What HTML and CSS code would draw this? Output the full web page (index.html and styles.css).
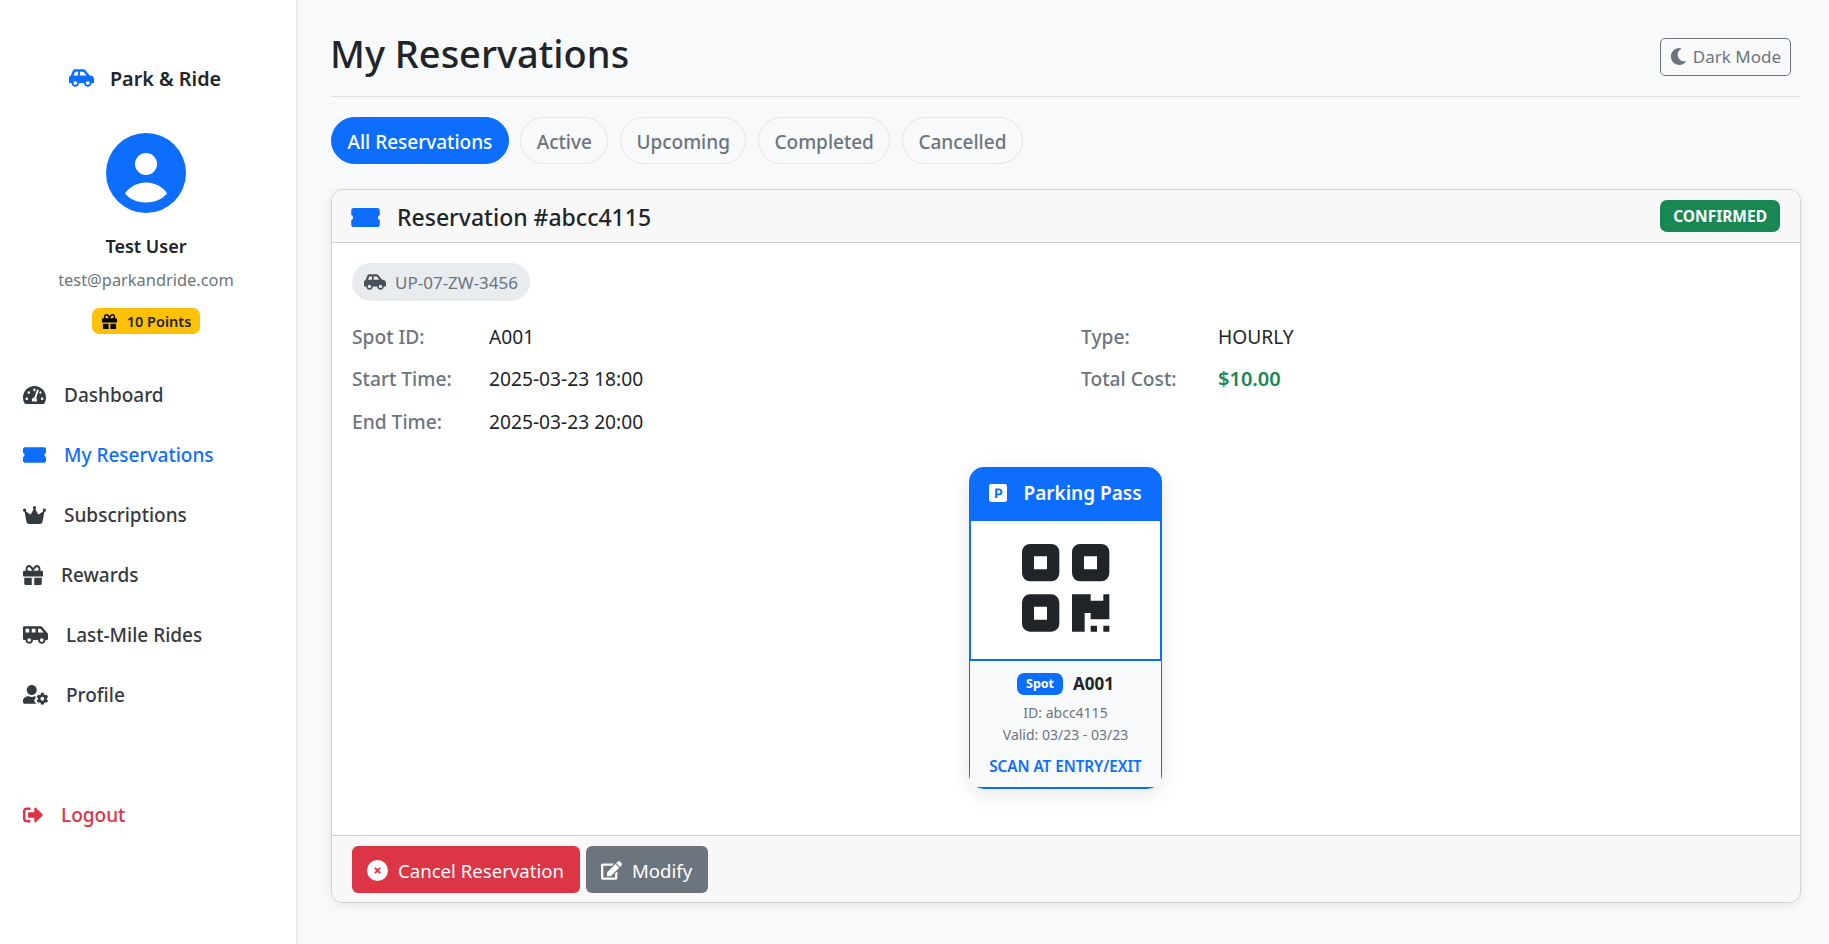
FILE: index.html
```html
<!DOCTYPE html>
<html lang="en">
<head>
    <meta charset="UTF-8">
    <meta name="viewport" content="width=device-width, initial-scale=1.0">
    <title>My Reservations - Park &amp; Ride</title>
    <link rel="stylesheet" href="styles.css">
</head>
<body>

<!-- Sidebar -->
<aside class="sidebar">
    <div class="brand">
        <svg class="brand-icon" viewBox="0 32 640 448"><path d="M544 192h-16L419.22 56.02A64.025 64.025 0 0 0 369.24 32H155.33c-26.17 0-49.7 15.93-59.42 40.23L48 194.26C20.44 201.4 0 226.21 0 256v112c0 8.84 7.16 16 16 16h48c0 53.02 42.98 96 96 96s96-42.98 96-96h128c0 53.02 42.98 96 96 96s96-42.98 96-96h48c8.84 0 16-7.16 16-16v-80c0-53.02-42.98-96-96-96zM160 432c-26.47 0-48-21.53-48-48s21.53-48 48-48 48 21.53 48 48-21.53 48-48 48zm72-240H116.93l38.4-96H232v96zm48 0V96h89.24l76.8 96H280zm200 240c-26.47 0-48-21.53-48-48s21.53-48 48-48 48 21.53 48 48-21.53 48-48 48z"/></svg>
        <span>Park &amp; Ride</span>
    </div>

    <div class="user">
        <svg class="avatar" viewBox="0 0 16 16">
            <circle cx="8" cy="8" r="8" fill="#0d6efd"/>
            <circle cx="8" cy="6.2" r="2.2" fill="#fff"/>
            <path fill="#fff" d="M3.8 12.1C4.6 10.9 6 9.9 8 9.9s3.5 1 4.2 2.2C11.2 13.3 9.7 13.9 8 13.9s-3.2-.6-4.2-1.8z"/>
        </svg>
        <div class="user-name">Test User</div>
        <div class="user-email">test@parkandride.com</div>
        <span class="points">
            <svg class="points-icon" viewBox="0 32 512 448" preserveAspectRatio="none"><path d="M32 448c0 17.7 14.3 32 32 32h160V320H32v128zm256 32h160c17.7 0 32-14.3 32-32V320H288v160zm192-320h-42.1c6.2-12.1 10.1-25.5 10.1-40 0-48.5-39.5-88-88-88-41.6 0-68.5 21.3-103 68.3-34.5-47-61.4-68.3-103-68.3-48.5 0-88 39.5-88 88 0 14.5 3.8 27.9 10.1 40H32c-17.7 0-32 14.3-32 32v80c0 8.8 7.2 16 16 16h480c8.8 0 16-7.2 16-16v-80c0-17.7-14.3-32-32-32zm-326.1 0c-22.1 0-40-17.9-40-40s17.9-40 40-40c19.9 0 34.6 3.3 86.1 80h-86.1zm206.1 0h-86.1c51.4-76.5 65.7-80 86.1-80 22.1 0 40 17.9 40 40s-17.9 40-40 40z"/></svg>
            10 Points
        </span>
    </div>

    <nav class="nav">
        <a class="nav-link" href="#">
            <svg class="nav-icon" viewBox="0 32 576 448"><path d="M288 32C128.94 32 0 160.94 0 320c0 52.8 14.25 102.26 39.06 144.8 5.61 9.62 16.3 15.2 27.44 15.2h443c11.14 0 21.83-5.58 27.44-15.2C561.75 422.26 576 372.8 576 320c0-159.06-128.94-288-288-288zm0 64c14.71 0 26.58 10.13 30.32 23.65-1.11 2.26-2.64 4.23-3.45 6.67l-9.22 27.67c-5.13 3.49-10.97 6.01-17.64 6.01-17.67 0-32-14.33-32-32S270.33 96 288 96zM96 384c-17.67 0-32-14.33-32-32s14.33-32 32-32 32 14.33 32 32-14.33 32-32 32zm48-160c-17.67 0-32-14.33-32-32s14.33-32 32-32 32 14.33 32 32-14.33 32-32 32zm246.77-72.41l-61.33 184C343.13 347.33 352 364.54 352 384c0 11.72-3.38 22.55-8.88 32H232.88c-5.5-9.45-8.88-20.28-8.88-32 0-33.94 26.5-61.43 59.9-63.59l61.34-184.01c4.17-12.56 17.73-19.45 30.36-15.17 12.57 4.19 19.35 17.77 15.17 30.36zm14.66 57.2l15.52-46.55c3.47-1.29 7.13-2.23 11.05-2.23 17.67 0 32 14.33 32 32s-14.33 32-32 32c-11.38-.01-20.89-6.28-26.57-15.22zM480 384c-17.67 0-32-14.33-32-32s14.33-32 32-32 32 14.33 32 32-14.33 32-32 32z"/></svg>
            Dashboard
        </a>
        <a class="nav-link active" href="#">
            <svg class="nav-icon" viewBox="0 64 576 384"><path d="M48 64h480c26.5 0 48 21.5 48 48v96c-24 0-36 22-36 48s12 48 36 48v96c0 26.5-21.5 48-48 48H48c-26.5 0-48-21.5-48-48v-96c24 0 36-22 36-48s-12-48-36-48v-96c0-26.5 21.5-48 48-48z"/></svg>
            My Reservations
        </a>
        <a class="nav-link" href="#">
            <svg class="nav-icon" viewBox="0 32 576 448"><path d="M309 106c11.400-7 19-19.700 19-34c0-22.100-17.900-40-40-40s-40 17.900-40 40c0 14.400 7.600 27 19 34L209.700 220.600c-9.100 18.200-32.700 23.400-48.600 10.700L72 160c5-6.700 8-15 8-24c0-22.100-17.900-40-40-40S0 113.900 0 136s17.900 40 40 40c.2 0 .5 0 .7 0L86.400 427.400c5.500 30.400 32 52.600 63 52.600H426.600c30.900 0 57.400-22.100 63-52.600L535.300 176c.2 0 .5 0 .7 0c22.100 0 40-17.900 40-40s-17.900-40-40-40s-40 17.900-40 40c0 9 3 17.300 8 24l-89.100 71.300c-15.900 12.700-39.500 7.500-48.600-10.700L309 106z"/></svg>
            Subscriptions
        </a>
        <a class="nav-link" href="#">
            <svg class="nav-icon small tall" viewBox="0 32 512 448" preserveAspectRatio="none"><path d="M32 448c0 17.7 14.3 32 32 32h160V320H32v128zm256 32h160c17.7 0 32-14.3 32-32V320H288v160zm192-320h-42.1c6.2-12.1 10.1-25.5 10.1-40 0-48.5-39.5-88-88-88-41.6 0-68.5 21.3-103 68.3-34.5-47-61.4-68.3-103-68.3-48.5 0-88 39.5-88 88 0 14.5 3.8 27.9 10.1 40H32c-17.7 0-32 14.3-32 32v80c0 8.8 7.2 16 16 16h480c8.8 0 16-7.2 16-16v-80c0-17.7-14.3-32-32-32zm-326.1 0c-22.1 0-40-17.9-40-40s17.9-40 40-40c19.9 0 34.6 3.3 86.1 80h-86.1zm206.1 0h-86.1c51.4-76.5 65.7-80 86.1-80 22.1 0 40 17.9 40 40s-17.9 40-40 40z"/></svg>
            Rewards
        </a>
        <a class="nav-link" href="#">
            <svg class="nav-icon wide" viewBox="0 32 640 448"><path d="M628.88 210.65L494.39 49.27A48.01 48.01 0 0 0 457.52 32H32C14.33 32 0 46.33 0 64v288c0 17.67 14.33 32 32 32h32c0 53.02 42.98 96 96 96s96-42.98 96-96h128c0 53.02 42.98 96 96 96s96-42.98 96-96h32c17.67 0 32-14.33 32-32V241.38c0-11.23-3.94-22.1-11.12-30.73zM64 192V96h96v96H64zm96 240c-26.51 0-48-21.49-48-48s21.49-48 48-48 48 21.49 48 48-21.49 48-48 48zm160-240h-96V96h96v96zm160 240c-26.51 0-48-21.49-48-48s21.49-48 48-48 48 21.49 48 48-21.49 48-48 48zm-96-240V96h66.02l80 96H384z"/></svg>
            Last-Mile Rides
        </a>
        <a class="nav-link" href="#">
            <svg class="nav-icon wide tall" viewBox="0 0 640 512"><path d="M610.5 373.3c2.6-14.1 2.6-28.5 0-42.6l25.8-14.9c3-1.7 4.3-5.2 3.3-8.5-6.7-21.6-18.2-41.2-33.2-57.4-2.3-2.5-6-3.1-9-1.4l-25.8 14.9c-10.9-9.3-23.4-16.5-36.9-21.3v-29.8c0-3.4-2.4-6.4-5.7-7.1-22.3-5-45-4.8-66.2 0-3.3.7-5.7 3.7-5.7 7.1v29.8c-13.5 4.8-26 12-36.9 21.3l-25.8-14.9c-2.9-1.7-6.7-1.1-9 1.4-15 16.2-26.5 35.8-33.2 57.4-1 3.3.4 6.8 3.3 8.5l25.8 14.9c-2.6 14.1-2.6 28.5 0 42.6l-25.8 14.9c-3 1.7-4.3 5.2-3.3 8.5 6.7 21.6 18.2 41.1 33.2 57.4 2.3 2.5 6 3.1 9 1.4l25.8-14.9c10.9 9.3 23.4 16.5 36.9 21.3v29.8c0 3.4 2.4 6.4 5.7 7.1 22.3 5 45 4.8 66.2 0 3.3-.7 5.7-3.7 5.7-7.1v-29.8c13.5-4.8 26-12 36.9-21.3l25.8 14.9c2.9 1.7 6.7 1.1 9-1.4 15-16.2 26.5-35.8 33.2-57.4 1-3.3-.4-6.8-3.3-8.5l-25.8-14.9zM496 400.5c-26.8 0-48.5-21.8-48.5-48.5s21.8-48.5 48.5-48.5 48.5 21.8 48.5 48.5-21.7 48.5-48.5 48.5zM224 256c70.7 0 128-57.3 128-128S294.7 0 224 0 96 57.3 96 128s57.3 128 128 128z"/><path d="M134.4 288h16.7c22.2 10.2 46.9 16 72.9 16s50.7-5.8 72.9-16h16c5 0 10 .3 15 1-8 25-12 45-10 63l-20 12c-10 8-12 20-6 44 5 18 20 36 26 44 3 5 6 10 16 12 4 12 10 17 22 17H48c-26.5 0-48-21.5-48-48v-41.6C0 348 60 288 134.4 288z"/></svg>
            Profile
        </a>
    </nav>

    <a class="logout" href="#">
        <svg class="nav-icon small" viewBox="0 32 512 448"><path d="M497 273L329 441c-15 15-41 4.5-41-17v-96H152c-13.3 0-24-10.7-24-24v-96c0-13.3 10.7-24 24-24h136V88c0-21.4 25.9-32 41-17l168 168c9.3 9.4 9.3 24.6 0 34zM192 436v-40c0-6.6-5.4-12-12-12H96c-17.7 0-32-14.3-32-32V160c0-17.7 14.3-32 32-32h84c6.6 0 12-5.4 12-12V76c0-6.6-5.4-12-12-12H96c-53 0-96 43-96 96v192c0 53 43 96 96 96h84c6.6 0 12-5.4 12-12z"/></svg>
        Logout
    </a>
</aside>

<!-- Main content -->
<main class="main">
    <header class="page-header">
        <h1>My Reservations</h1>
        <button class="dark-toggle" type="button">
            <svg class="moon" viewBox="0 0 512 512"><path d="M283.211 512c78.962 0 151.079-35.925 198.857-94.792 7.068-8.708-.639-21.43-11.562-19.35-124.203 23.654-238.262-71.576-238.262-196.954 0-72.222 38.662-138.635 101.498-174.394 9.686-5.512 7.25-20.197-3.756-22.23A258.156 258.156 0 0 0 283.211 0c-141.309 0-256 114.511-256 256 0 141.309 114.511 256 256 256z"/></svg>
            Dark Mode
        </button>
    </header>

    <div class="tabs">
        <a class="tab active" href="#">All Reservations</a>
        <a class="tab" href="#">Active</a>
        <a class="tab" href="#">Upcoming</a>
        <a class="tab" href="#">Completed</a>
        <a class="tab" href="#">Cancelled</a>
    </div>

    <section class="card">
        <div class="card-header">
            <h2>
                <svg class="ticket" viewBox="0 64 576 384"><path d="M48 64h480c26.5 0 48 21.5 48 48v96c-24 0-36 22-36 48s12 48 36 48v96c0 26.5-21.5 48-48 48H48c-26.5 0-48-21.5-48-48v-96c24 0 36-22 36-48s-12-48-36-48v-96c0-26.5 21.5-48 48-48z"/></svg>
                Reservation #abcc4115
            </h2>
            <span class="status">CONFIRMED</span>
        </div>

        <div class="card-body">
            <span class="plate">
                <svg class="plate-icon" viewBox="0 32 640 448"><path d="M544 192h-16L419.22 56.02A64.025 64.025 0 0 0 369.24 32H155.33c-26.17 0-49.7 15.93-59.42 40.23L48 194.26C20.44 201.4 0 226.21 0 256v112c0 8.84 7.16 16 16 16h48c0 53.02 42.98 96 96 96s96-42.98 96-96h128c0 53.02 42.98 96 96 96s96-42.98 96-96h48c8.84 0 16-7.16 16-16v-80c0-53.02-42.98-96-96-96zM160 432c-26.47 0-48-21.53-48-48s21.53-48 48-48 48 21.53 48 48-21.53 48-48 48zm72-240H116.93l38.4-96H232v96zm48 0V96h89.24l76.8 96H280zm200 240c-26.47 0-48-21.53-48-48s21.53-48 48-48 48 21.53 48 48-21.53 48-48 48z"/></svg>
                UP-07-ZW-3456
            </span>

            <div class="details">
                <div class="detail"><span class="label">Spot ID:</span><span>A001</span></div>
                <div class="detail"><span class="label">Type:</span><span>HOURLY</span></div>
                <div class="detail"><span class="label">Start Time:</span><span>2025-03-23 18:00</span></div>
                <div class="detail"><span class="label">Total Cost:</span><span class="cost">$10.00</span></div>
                <div class="detail"><span class="label">End Time:</span><span>2025-03-23 20:00</span></div>
            </div>

            <div class="pass">
                <div class="pass-header">
                    <svg class="p-icon" viewBox="0 0 16 16"><path fill-rule="evenodd" d="M2 0a2 2 0 0 0-2 2v12a2 2 0 0 0 2 2h12a2 2 0 0 0 2-2V2a2 2 0 0 0-2-2H2zm3.5 4h3.3c1.9 0 3.2 1.2 3.2 3s-1.3 3-3.2 3H7.4v2.5H5.5V4zm1.9 1.5v3h1.2c1 0 1.5-.6 1.5-1.500s-.5-1.500-1.500-1.500H7.400z"/></svg>
                    Parking Pass
                </div>
                <div class="pass-qr">
                    <svg class="qr" viewBox="0 0 264 264">
                        <path fill-rule="evenodd" d="M24 0h64a24 24 0 0 1 24 24v64a24 24 0 0 1-24 24H24A24 24 0 0 1 0 88V24A24 24 0 0 1 24 0zm12 37v39h39V37z"/>
                        <path fill-rule="evenodd" d="M174 0h64a24 24 0 0 1 24 24v64a24 24 0 0 1-24 24h-64a24 24 0 0 1-24-24V24a24 24 0 0 1 24-24zm12 37v39h39V37z"/>
                        <path fill-rule="evenodd" d="M24 151h64a24 24 0 0 1 24 24v64a24 24 0 0 1-24 24H24a24 24 0 0 1-24-24v-64a24 24 0 0 1 24-24zm12 37v39h39v-39z"/>
                        <path d="M150 151h56v19h38v-19h18v75h-56v-19h-18v56h-38z"/>
                        <path d="M206 245h19v18h-19zM244 245h18v18h-18z"/>
                    </svg>
                </div>
                <div class="pass-info">
                    <div class="pass-spot"><span class="spot-tag">Spot</span><strong>A001</strong></div>
                    <div class="pass-meta">ID: abcc4115</div>
                    <div class="pass-meta">Valid: 03/23 - 03/23</div>
                    <div class="pass-scan">SCAN AT ENTRY/EXIT</div>
                </div>
            </div>
        </div>

        <div class="card-footer">
            <button class="btn btn-danger" type="button">
                <svg class="btn-icon" viewBox="0 0 16 16"><circle cx="8" cy="8" r="8" fill="#fff"/><path d="M6 6l4 4M10 6l-4 4" stroke="#dc3545" stroke-width="1.5" fill="none"/></svg>
                Cancel Reservation
            </button>
            <button class="btn btn-secondary" type="button">
                <svg class="btn-icon edit" viewBox="0 0 576 512"><path d="M402.6 83.2l90.2 90.2c3.8 3.8 3.8 10 0 13.8L274.4 405.6l-92.8 10.3c-12.4 1.4-22.9-9.1-21.5-21.5l10.3-92.8L388.8 83.2c3.8-3.8 10-3.8 13.8 0zm162-22.9l-48.8-48.8c-15.2-15.2-39.9-15.2-55.2 0l-35.4 35.4c-3.8 3.8-3.8 10 0 13.8l90.2 90.2c3.8 3.8 10 3.8 13.8 0l35.4-35.4c15.2-15.3 15.2-40 0-55.2zM384 346.2V448H64V128h229.8c3.2 0 6.2-1.3 8.5-3.5l40-40c7.6-7.6 2.2-20.5-8.5-20.5H48C21.5 64 0 85.5 0 112v352c0 26.5 21.5 48 48 48h352c26.5 0 48-21.5 48-48V306.2c0-10.7-12.9-16-20.5-8.5l-40 40c-2.2 2.3-3.5 5.3-3.5 8.5z"/></svg>
                Modify
            </button>
        </div>
    </section>
</main>

</body>
</html>
```

FILE: styles.css
```css
* {
    box-sizing: border-box;
}

body {
    margin: 0;
    height: 944px;
    display: flex;
    overflow: hidden;
    font-family: "Noto Sans", sans-serif;
    font-size: 19.2px;
    color: #212529;
    background-color: #f8f9fa;
}

a {
    text-decoration: none;
}

/* Sidebar */
.sidebar {
    width: 298px;
    flex-shrink: 0;
    padding: 63px 27px 0 23px;
    background-color: #fff;
    border-right: 2px solid #e9ecef;
    display: flex;
    flex-direction: column;
}

.brand {
    display: flex;
    align-items: center;
    justify-content: center;
    gap: 16px;
    height: 30px;
    padding-right: 2px;
    font-size: 19.8px;
    font-weight: 600;
}

.brand-icon {
    width: 25px;
    height: 18px;
    fill: #0d6efd;
}

.user {
    margin-top: 40px;
    display: flex;
    flex-direction: column;
    align-items: center;
}

.avatar {
    width: 80px;
    height: 80px;
}

.user-name {
    margin-top: 20px;
    font-size: 18px;
    font-weight: 600;
    line-height: 26px;
}

.user-email {
    margin-top: 9px;
    font-size: 16.4px;
    line-height: 24px;
    color: #6c757d;
}

.points {
    margin-top: 16px;
    height: 26px;
    padding: 0 9px 0 10px;
    display: flex;
    align-items: center;
    gap: 10px;
    font-size: 14.5px;
    font-weight: 600;
    background-color: #ffc107;
    border-radius: 7px;
}

.points-icon {
    width: 15px;
    height: 15px;
}

.nav {
    margin-top: 30px;
    display: flex;
    flex-direction: column;
}

.nav-link,
.logout {
    height: 60px;
    padding-top: 2px;
    display: flex;
    align-items: center;
    gap: 18px;
    font-size: 19px;
    font-weight: 500;
    color: #343a40;
}

.nav-link.active {
    color: #0d6efd;
}

.nav-icon {
    width: 23px;
    height: 18px;
    flex-shrink: 0;
    fill: currentColor;
}

.nav-icon.small {
    width: 20px;
}

.nav-icon.wide {
    width: 25px;
}

.nav-icon.tall {
    height: 20px;
}

.logout {
    margin-top: 60px;
    color: #dc3545;
}

/* Main */
.main {
    flex: 1;
    min-width: 0;
    padding: 24px 28px 0 33px;
}

.page-header {
    height: 73px;
    padding-bottom: 15px;
    display: flex;
    align-items: center;
    justify-content: space-between;
    border-bottom: 1px solid #dee2e6;
}

h1 {
    margin: 0 0 0 -1px;
    font-size: 38px;
    font-weight: 500;
    line-height: 48px;
}

.dark-toggle {
    height: 38px;
    margin: 8px 10px 0 0;
    padding: 0 9px;
    display: flex;
    align-items: center;
    gap: 6px;
    font-family: inherit;
    font-size: 17px;
    color: #6c757d;
    background: transparent;
    border: 1px solid #6c757d;
    border-radius: 5px;
}

.moon {
    width: 17px;
    height: 17px;
    fill: currentColor;
}

.tabs {
    margin-top: 20px;
    display: flex;
    gap: 11.5px;
}

.tab {
    height: 47px;
    padding: 2px 15.5px 0;
    display: flex;
    align-items: center;
    font-size: 19px;
    font-weight: 500;
    color: #6c757d;
    border: 1px solid #e2e4e7;
    border-radius: 24px;
}

.tab.active {
    color: #fff;
    background-color: #0d6efd;
    border-color: #0d6efd;
}

/* Reservation card */
.card {
    margin-top: 25px;
    background-color: #fff;
    border: 1px solid #cfd1d3;
    border-radius: 12px;
    box-shadow: 0 2px 8px rgba(0, 0, 0, 0.08);
    overflow: hidden;
}

.card-header {
    height: 53px;
    padding: 0 20px 0 19px;
    display: flex;
    align-items: center;
    justify-content: space-between;
    background-color: #f8f8f8;
    border-bottom: 1px solid #cfd1d3;
}

h2 {
    margin: 2px 0 0;
    display: flex;
    align-items: center;
    gap: 17px;
    font-size: 23px;
    font-weight: 500;
}

.ticket {
    width: 29px;
    height: 19px;
    fill: #0d6efd;
}

.status {
    height: 32px;
    padding: 0 13px;
    display: flex;
    align-items: center;
    font-size: 15.5px;
    font-weight: 700;
    color: #fff;
    background-color: #198754;
    border-radius: 7px;
}

.card-body {
    height: 592px;
    padding: 20px 21px 0 20px;
}

.plate {
    display: inline-flex;
    align-items: center;
    gap: 9px;
    height: 38px;
    padding: 0 12px;
    font-size: 17px;
    color: #6c757d;
    background-color: #e9ecef;
    border-radius: 19px;
}

.plate-icon {
    width: 22px;
    height: 16px;
    fill: #495057;
}

.details {
    margin-top: 22px;
    display: grid;
    grid-template-columns: 702px 702px;
    column-gap: 27px;
    row-gap: 16px;
}

.detail {
    display: flex;
    height: 26.5px;
    align-items: center;
}

.label {
    width: 137px;
    font-weight: 500;
    color: #6c757d;
}

.cost {
    font-size: 20px;
    font-weight: 600;
    color: #198754;
}

/* Parking pass */
.pass {
    width: 193px;
    margin: 32px auto 0;
    border-radius: 15px;
    box-shadow: 0 5px 20px rgba(0, 0, 0, 0.1);
    overflow: hidden;
    text-align: center;
}

.pass-header {
    height: 52px;
    display: flex;
    align-items: center;
    justify-content: center;
    gap: 16px;
    font-size: 19px;
    font-weight: 600;
    color: #fff;
    background-color: #0d6efd;
}

.p-icon {
    width: 18px;
    height: 18px;
    fill: #fff;
}

.pass-qr {
    height: 142px;
    padding-bottom: 4px;
    display: flex;
    align-items: center;
    justify-content: center;
    background-color: #fff;
    border: 2px solid #0d6efd;
}

.qr {
    width: 88px;
    height: 88px;
    fill: #212529;
}

.pass-info {
    height: 128px;
    padding-top: 11px;
    background-color: #f8f9fa;
    border: 1px solid #0d6efd;
    border-top: 0;
    border-bottom-width: 2px;
}

.pass-spot {
    display: flex;
    align-items: center;
    justify-content: center;
    gap: 10px;
    height: 24px;
    margin-bottom: 6px;
    font-size: 17px;
}

.spot-tag {
    height: 22px;
    padding: 0 9px;
    display: flex;
    align-items: center;
    font-size: 12.5px;
    font-weight: 700;
    color: #fff;
    background-color: #0d6efd;
    border-radius: 7px;
}

.pass-meta {
    font-size: 14px;
    line-height: 22px;
    color: #6c757d;
}

.pass-scan {
    margin-top: 10px;
    font-size: 15.2px;
    font-weight: 600;
    color: #0d6efd;
}

/* Footer */
.card-footer {
    height: 67px;
    padding: 10px 20px 0;
    display: flex;
    gap: 6px;
    background-color: #f8f8f8;
    border-top: 1px solid #cfd1d3;
}

.btn {
    height: 47px;
    padding: 2px 16px 0 15px;
    display: flex;
    align-items: center;
    gap: 10px;
    font-family: inherit;
    font-size: 18.6px;
    color: #fff;
    border: 0;
    border-radius: 6px;
}

.btn-danger {
    background-color: #dc3545;
}

.btn-secondary {
    background-color: #6c757d;
}

.btn-icon {
    width: 21px;
    height: 21px;
    fill: #fff;
}
```
